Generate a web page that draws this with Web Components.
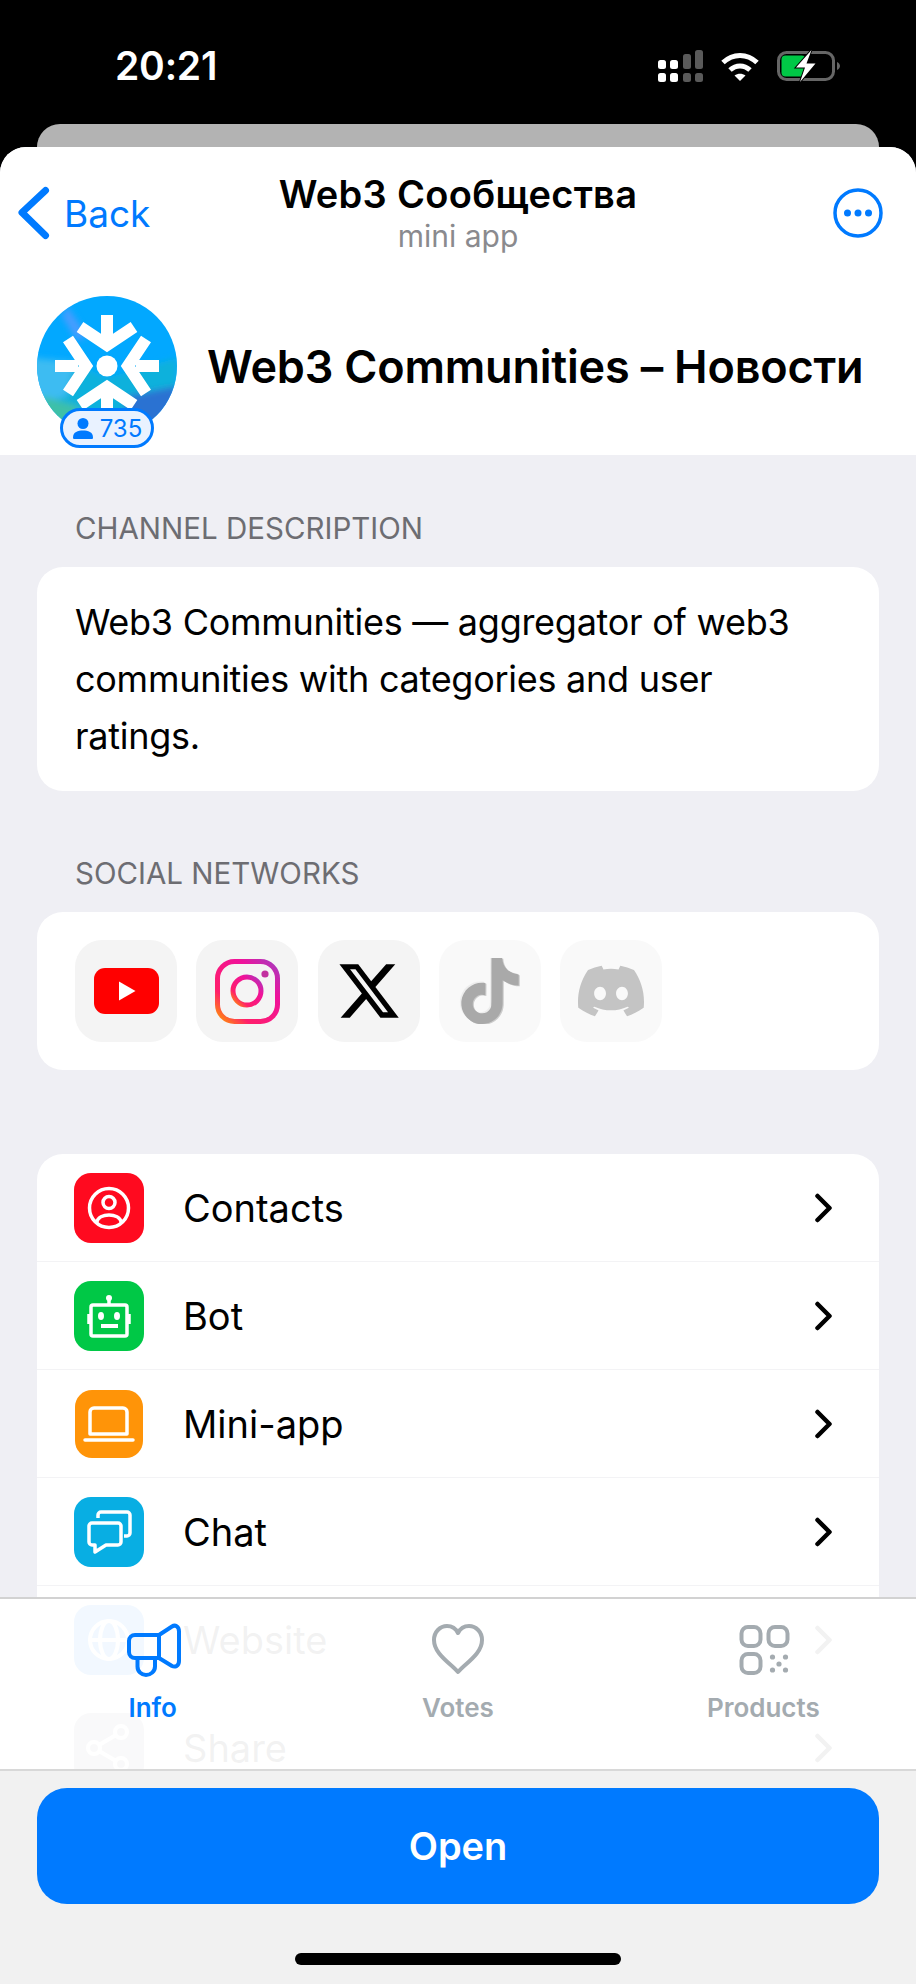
<!DOCTYPE html>
<html>
<head>
<meta charset="utf-8">
<title>Web3 Communities</title>
<style>
  html, body { margin: 0; padding: 0; background: #000; }
  body { font-family: Inter, "Noto Sans", "Liberation Sans", sans-serif; }
</style>
</head>
<body>
<app-shell>
  <status-bar slot="status" time="20:21"></status-bar>
  <nav-bar slot="nav" title-text="Web3 Сообщества" subtitle="mini app" back="Back"></nav-bar>
  <channel-hero slot="hero" name="Web3 Communities – Новости" members="735"></channel-hero>

  <section-label>CHANNEL DESCRIPTION</section-label>
  <info-card pad="text">Web3 Communities — aggregator of web3 communities with categories and user ratings.</info-card>

  <section-label gap="65">SOCIAL NETWORKS</section-label>
  <info-card pad="tiles">
    <social-tile>
      <svg width="102" height="102" viewBox="0 0 102 102"><rect x="19" y="28" width="65" height="46" rx="11" fill="#f00"/><path d="M44 41.5L60.5 51 44 60.5z" fill="#fff"/></svg>
    </social-tile>
    <social-tile>
      <svg width="102" height="102" viewBox="0 0 102 102"><defs><linearGradient id="ig" x1="0" y1="1" x2="1" y2="0"><stop offset="0" stop-color="#ff9a00"/><stop offset=".25" stop-color="#ff1f6b"/><stop offset=".7" stop-color="#f0129a"/><stop offset="1" stop-color="#a53bc0"/></linearGradient></defs><rect x="21.5" y="21.5" width="60" height="60" rx="17" fill="none" stroke="url(#ig)" stroke-width="5"/><circle cx="51" cy="51" r="14" fill="none" stroke="url(#ig)" stroke-width="5"/><circle cx="69" cy="34" r="3.6" fill="#c2309f"/></svg>
    </social-tile>
    <social-tile>
      <svg width="66" height="66" viewBox="0 0 24 24"><path d="M18.244 2.25h3.308l-7.227 8.26 8.502 11.24H16.17l-5.214-6.817L4.99 21.75H1.68l7.73-8.835L1.254 2.25H8.08l4.713 6.231zm-1.161 17.52h1.833L7.084 4.126H5.117z" fill="#000"/></svg>
    </social-tile>
    <social-tile dim>
      <svg width="66" height="66" viewBox="0 0 24 24"><path transform="translate(-.5 -.4)" fill="#ddd" d="M12.525.02c1.31-.02 2.61-.01 3.91-.02.08 1.53.63 3.09 1.75 4.17 1.12 1.11 2.7 1.62 4.24 1.79v4.03c-1.44-.05-2.89-.35-4.2-.97-.57-.26-1.1-.59-1.62-.93-.01 2.92.01 5.84-.02 8.75-.08 1.4-.54 2.79-1.35 3.94-1.31 1.92-3.58 3.17-5.91 3.21-1.43.08-2.86-.31-4.08-1.03-2.02-1.19-3.44-3.37-3.65-5.71-.02-.5-.03-1-.01-1.49.18-1.9 1.12-3.72 2.58-4.96 1.66-1.44 3.98-2.13 6.15-1.72.02 1.48-.04 2.96-.04 4.44-.99-.32-2.15-.23-3.02.37-.63.41-1.11 1.04-1.36 1.75-.21.51-.15 1.07-.14 1.61.24 1.64 1.82 3.02 3.5 2.87 1.12-.01 2.19-.66 2.77-1.61.19-.33.4-.67.41-1.06.1-1.79.06-3.57.07-5.36.01-4.03-.01-8.05.02-12.07z"/><path transform="translate(.4 .3)" fill="#9a9a9a" d="M12.525.02c1.31-.02 2.61-.01 3.91-.02.08 1.53.63 3.09 1.75 4.17 1.12 1.11 2.7 1.62 4.24 1.79v4.03c-1.44-.05-2.89-.35-4.2-.97-.57-.26-1.1-.59-1.62-.93-.01 2.92.01 5.84-.02 8.75-.08 1.4-.54 2.79-1.35 3.94-1.31 1.92-3.58 3.17-5.91 3.21-1.43.08-2.86-.31-4.08-1.03-2.02-1.19-3.44-3.37-3.65-5.71-.02-.5-.03-1-.01-1.49.18-1.9 1.12-3.72 2.58-4.96 1.66-1.44 3.98-2.13 6.15-1.72.02 1.48-.04 2.96-.04 4.44-.99-.32-2.15-.23-3.02.37-.63.41-1.11 1.04-1.36 1.75-.21.51-.15 1.07-.14 1.61.24 1.64 1.82 3.02 3.5 2.87 1.12-.01 2.19-.66 2.77-1.61.19-.33.4-.67.41-1.06.1-1.79.06-3.57.07-5.36.01-4.03-.01-8.05.02-12.07z"/><path fill="#555" d="M12.525.02c1.31-.02 2.61-.01 3.91-.02.08 1.53.63 3.09 1.75 4.17 1.12 1.11 2.7 1.62 4.24 1.79v4.03c-1.44-.05-2.89-.35-4.2-.97-.57-.26-1.1-.59-1.62-.93-.01 2.92.01 5.84-.02 8.75-.08 1.4-.54 2.79-1.35 3.94-1.31 1.92-3.58 3.17-5.91 3.21-1.43.08-2.86-.31-4.08-1.03-2.02-1.19-3.44-3.37-3.65-5.71-.02-.5-.03-1-.01-1.49.18-1.9 1.12-3.72 2.58-4.96 1.66-1.44 3.98-2.13 6.15-1.72.02 1.48-.04 2.96-.04 4.44-.99-.32-2.15-.23-3.02.37-.63.41-1.11 1.04-1.36 1.75-.21.51-.15 1.07-.14 1.61.24 1.64 1.82 3.02 3.5 2.87 1.12-.01 2.19-.66 2.77-1.61.19-.33.4-.67.41-1.06.1-1.79.06-3.57.07-5.36.01-4.03-.01-8.05.02-12.07z"/></svg>
    </social-tile>
    <social-tile dim>
      <svg width="66" height="66" viewBox="0 0 24 24"><path fill="#8a8a8a" d="M20.317 4.3698a19.7913 19.7913 0 00-4.8851-1.5152.0741.0741 0 00-.0785.0371c-.211.3753-.4447.8648-.6083 1.2495-1.8447-.2762-3.68-.2762-5.4868 0-.1636-.3933-.4058-.8742-.6177-1.2495a.077.077 0 00-.0785-.037 19.7363 19.7363 0 00-4.8852 1.515.0699.0699 0 00-.0321.0277C.5334 9.0458-.319 13.5799.0992 18.0578a.0824.0824 0 00.0312.0561c2.0528 1.5076 4.0413 2.4228 5.9929 3.0294a.0777.0777 0 00.0842-.0276c.4616-.6304.8731-1.2952 1.226-1.9942a.076.076 0 00-.0416-.1057c-.6528-.2476-1.2743-.5495-1.8722-.8923a.077.077 0 01-.0076-.1277c.1258-.0943.2517-.1923.3718-.2914a.0743.0743 0 01.0776-.0105c3.9278 1.7933 8.18 1.7933 12.0614 0a.0739.0739 0 01.0785.0095c.1202.099.246.1981.3728.2924a.077.077 0 01-.0066.1276 12.2986 12.2986 0 01-1.873.8914.0766.0766 0 00-.0407.1067c.3604.698.7719 1.3628 1.225 1.9932a.076.076 0 00.0842.0286c1.961-.6067 3.9495-1.5219 6.0023-3.0294a.077.077 0 00.0313-.0552c.5004-5.177-.8382-9.6739-3.5485-13.6604a.061.061 0 00-.0312-.0286zM8.02 15.3312c-1.1825 0-2.1569-1.0857-2.1569-2.419 0-1.3332.9555-2.4189 2.157-2.4189 1.2108 0 2.1757 1.0952 2.1568 2.419 0 1.3332-.9555 2.4189-2.1569 2.4189zm7.9748 0c-1.1825 0-2.1569-1.0857-2.1569-2.419 0-1.3332.9554-2.4189 2.1569-2.4189 1.2108 0 2.1757 1.0952 2.1568 2.419 0 1.3332-.946 2.4189-2.1568 2.4189Z"/></svg>
    </social-tile>
  </info-card>

  <link-list>
    <link-row label="Contacts" color="#ff0a1f">
      <svg width="70" height="70" viewBox="0 0 70 70" fill="none" stroke="#fff" stroke-width="3.500"><circle cx="35" cy="35" r="19.5"/><circle cx="35" cy="29.5" r="6"/><path d="M22.5 49.5C25 39.5 45 39.5 47.500 49.500"/></svg>
    </link-row>
    <link-row label="Bot" color="#00c846">
      <svg width="70" height="70" viewBox="0 0 70 70" fill="none" stroke="#fff" stroke-width="3.500"><rect x="17" y="24" width="36" height="31" rx="2"/><path d="M35 24v-7"/><circle cx="35" cy="17" r="3" fill="#fff" stroke="none"/><path d="M15 33v10M55 33v10"/><ellipse cx="27" cy="35" rx="3" ry="4" fill="#fff" stroke="none"/><ellipse cx="43" cy="35" rx="3" ry="4" fill="#fff" stroke="none"/><rect x="27" y="43" width="17" height="4" fill="#fff" stroke="none"/></svg>
    </link-row>
    <link-row label="Mini-app" color="#ff9408" size="68">
      <svg width="68" height="68" viewBox="0 0 68 68" fill="none" stroke="#fff" stroke-width="3.500"><path d="M15 44V22a4 4 0 0 1 4-4h29a4 4 0 0 1 4 4v22z" stroke-linejoin="round"/><path d="M10 50h48" stroke-linecap="round"/></svg>
    </link-row>
    <link-row label="Chat" color="#08aee3">
      <svg width="70" height="70" viewBox="0 0 70 70" fill="none" stroke="#fff" stroke-width="3.500" stroke-linejoin="round"><path d="M18 26h26a3 3 0 0 1 3 3v16a3 3 0 0 1-3 3H32l-11 7v-7h-3a3 3 0 0 1-3-3V29a3 3 0 0 1 3-3z"/><path d="M24 21v-3a3 3 0 0 1 3-3h26a3 3 0 0 1 3 3v18a3 3 0 0 1-3 3h-3"/></svg>
    </link-row>
    <link-row label="Website" color="#007aff">
      <svg width="70" height="70" viewBox="0 0 70 70" fill="none" stroke="#fff" stroke-width="4"><circle cx="35" cy="35" r="19"/><ellipse cx="35" cy="35" rx="9" ry="19"/><path d="M16 35h38"/></svg>
    </link-row>
    <link-row label="Share" color="#8e8e93" last>
      <svg width="70" height="70" viewBox="0 0 70 70" fill="none" stroke="#fff" stroke-width="4"><circle cx="47" cy="19" r="6"/><circle cx="20" cy="35" r="6"/><circle cx="47" cy="51" r="6"/><path d="M25 32l17-10M25 38l17 10"/></svg>
    </link-row>
  </link-list>

  <tab-bar slot="tabs">
    <tab-item label="Info" active>
      <svg width="60" height="60" viewBox="0 0 60 60" fill="none" stroke="#007aff" stroke-width="4" stroke-linejoin="round"><g transform="translate(1 0)"><path d="M35 13H11a6 6 0 0 0-6 6v11a6 6 0 0 0 6 6h24z"/><path d="M35 13l13-8.500c3-2 7-.5 7 5v29.500c0 5-4 6.500-7 5L35 36"/><path d="M13.500 36.500v8c0 5 4 8.500 8.500 8.500s9-3.500 9-8.500V37"/></g></svg>
    </tab-item>
    <tab-item label="Votes">
      <svg width="60" height="60" viewBox="0 0 60 60" fill="none" stroke="#a4abb0" stroke-width="4" stroke-linejoin="round"><path d="M30 50C22 41 6 32 6 18 6 10 12 4 19 4c5 0 9 3 11 7 2-4 6-7 11-7 7 0 13 6 13 14 0 14-16 23-24 32z"/></svg>
    </tab-item>
    <tab-item label="Products">
      <svg width="60" height="60" viewBox="0 0 60 60" fill="#a4abb0"><g transform="translate(1.500 -1)"><g fill="none" stroke="#a4abb0" stroke-width="4"><rect x="7" y="6" width="19" height="19" rx="6.500"/><rect x="34" y="6" width="19" height="19" rx="6.500"/><rect x="7" y="33" width="19" height="19" rx="6.500"/></g><circle cx="38" cy="36" r="2.600"/><circle cx="51" cy="36" r="2.600"/><circle cx="44.500" cy="43" r="2.600"/><circle cx="38" cy="49" r="2.600"/><circle cx="51" cy="49" r="2.600"/></g></svg>
    </tab-item>
  </tab-bar>

  <open-footer slot="footer" label="Open"></open-footer>
</app-shell>

<script>
// small helper, every element below builds its own shadow root the same way
class ShadowBase extends HTMLElement {
  constructor() {
    super();
    this.shadow = this.attachShadow({mode: "open"});
  }
  connectedCallback() {
    this.shadow.innerHTML = this.render();
  }
}

class AppShell extends ShadowBase {
  render() {
    return `
      <style>
        :host { display: block; width: 916px; height: 1984px; overflow: hidden; background: #000; }
        .frame { display: flex; flex-direction: column; height: 100%; }
        .peek { height: 23px; margin: 0 37px; flex: none; background: #b3b3b3; border-radius: 24px 24px 0 0; }
        .sheet { flex: 1; min-height: 0; display: flex; flex-direction: column; background: #efeff4; border-radius: 26px 26px 0 0; overflow: hidden; }
        .scroll { position: relative; flex: 1; min-height: 0; overflow: hidden; }
        .content { padding: 56px 37px 0; }
      </style>
      <div class="frame">
        <slot name="status"></slot>
        <div class="peek"></div>
        <div class="sheet">
          <slot name="nav"></slot>
          <div class="scroll">
            <slot name="hero"></slot>
            <div class="content"><slot></slot></div>
            <slot name="tabs"></slot>
          </div>
          <slot name="footer"></slot>
        </div>
      </div>
    `;
  }
}

class StatusBar extends ShadowBase {
  render() {
    return `
      <style>
        :host { display: flex; justify-content: space-between; align-items: flex-start; height: 124px; box-sizing: border-box; padding: 50px 76px 0 115px; color: #fff; flex: none; }
        .time { font-size: 39px; font-weight: 600; line-height: 32px; letter-spacing: -.2px; }
        .icons { display: flex; gap: 18px; }
        svg { display: block; }
      </style>
      <div class="time">${this.getAttribute("time")}</div>
      <div class="icons">
        <svg width="45" height="32" viewBox="0 0 45 32"><g fill="#fff"><rect x="0" y="10" width="8" height="9" rx="2.500"/><rect x="12" y="10" width="8" height="9" rx="2.500"/><rect x="0" y="23" width="8" height="9" rx="2.500"/><rect x="12" y="23" width="8" height="9" rx="2.500"/></g><g fill="#5a5a5a"><rect x="25" y="4" width="8" height="15" rx="2.500"/><rect x="37" y="0" width="8" height="19" rx="2.500"/><rect x="25" y="23" width="8" height="9" rx="2.500"/><rect x="37" y="23" width="8" height="9" rx="2.500"/></g></svg>
        <svg width="38" height="32" viewBox="0 0 38 32"><g fill="none" stroke="#fff" stroke-width="5"><path d="M2 12.500C12 3 26 3 36 12.500"/><path d="M9 20C15 14.500 23 14.500 29 20"/></g><path d="M13.500 25.500C17 23 21 23 24.500 25.500L19 31z" fill="#fff"/></svg>
        <svg width="63" height="32" viewBox="0 0 63 32"><rect x="1.500" y="2.500" width="55" height="27" rx="8" fill="none" stroke="#666" stroke-width="3"/><path d="M60 12c2 1 3 2.500 3 4s-1 3-3 4z" fill="#666"/><rect x="4.500" y="5.500" width="24" height="21" rx="4" fill="#00c846"/><path d="M34.500 0L19 17.500h9L23 32l15.500-18.500h-9z" fill="#fff" stroke="#000" stroke-width="2" paint-order="stroke"/></svg>
      </div>
    `;
  }
}

class NavBar extends ShadowBase {
  render() {
    return `
      <style>
        :host { display: grid; grid-template-columns: 1fr auto 1fr; align-items: center; height: 149px; box-sizing: border-box; padding: 20px 33px 37px; background: #fff; flex: none; }
        .back { display: flex; align-items: center; gap: 14px; margin-left: -15px; color: #007aff; font-size: 37px; }
        .center { text-align: center; padding-top: 4px; }
        .title { font-size: 38px; font-weight: 600; line-height: 42px; color: #000; letter-spacing: .3px; }
        .sub { font-size: 30px; line-height: 42px; color: #8a8a8e; }
        .more { justify-self: end; display: block; }
        svg { display: block; }
      </style>
      <div class="back">
        <svg width="32" height="54" viewBox="0 0 32 54" fill="none" stroke="#007aff" stroke-width="7" stroke-linecap="round" stroke-linejoin="round"><path d="M27.500 4.500L4 26.500l23.500 23"/></svg>
        <span>${this.getAttribute("back")}</span>
      </div>
      <div class="center">
        <div class="title">${this.getAttribute("title-text")}</div>
        <div class="sub">${this.getAttribute("subtitle")}</div>
      </div>
      <svg class="more" width="50" height="50" viewBox="0 0 50 50"><circle cx="25" cy="25" r="23" fill="none" stroke="#007aff" stroke-width="3.500"/><g fill="#007aff"><circle cx="14.500" cy="25" r="3.500"/><circle cx="25" cy="25" r="3.500"/><circle cx="35.500" cy="25" r="3.500"/></g></svg>
    `;
  }
}

class ChannelHero extends ShadowBase {
  render() {
    return `
      <style>
        :host { display: flex; align-items: center; gap: 30px; padding: 0 37px 19px; background: #fff; }
        .avatar { position: relative; width: 140px; height: 140px; flex: none; }
        .avatar svg.pic { display: block; }
        .badge { position: absolute; left: 23px; top: 112px; width: 94px; height: 40px; box-sizing: border-box; display: flex; align-items: center; justify-content: center; gap: 6px; border: 3px solid #007aff; border-radius: 20px; background: #e9f2ff; color: #007aff; font-size: 24px; }
        h1 { margin: 0; font-size: 45px; font-weight: 600; color: #000; white-space: nowrap; letter-spacing: -.2px; }
      </style>
      <div class="avatar">
        <svg class="pic" width="140" height="140" viewBox="0 0 140 140">
          <defs><clipPath id="c"><circle cx="70" cy="70" r="70"/></clipPath><filter id="b"><feGaussianBlur stdDeviation="3"/></filter></defs>
          <g clip-path="url(#c)">
            <rect width="140" height="140" fill="#02a8ff"/>
            <g filter="url(#b)">
              <path d="M-5 62L36 66 70 82 140 62V150H-5z" fill="#0fb1dc"/>
              <path d="M-5 62L38 66 30 100-5 110z" fill="#3dbcf2"/>
              <path d="M5 100L40 110 60 150H0z" fill="#3cc0a8"/>
              <path d="M90 100L140 90V150H80z" fill="#2a72d2"/>
              <path d="M30 10L50 40 40 45 25 20z" fill="#4a9cff"/>
            </g>
            <g fill="none" stroke="#fff" stroke-width="12">
              <path d="M70 19V42"/><path d="M43 31L70 49 97 31"/>
              <path d="M70 121V98"/><path d="M43 109L70 91 97 109"/>
              <path d="M18 70H41"/><path d="M31 43L49 70 31 97"/>
              <path d="M122 70H99"/><path d="M109 43L91 70 109 97"/>
            </g>
            <circle cx="70" cy="70" r="10.500" fill="#fff"/>
          </g>
        </svg>
        <div class="badge">
          <svg width="22" height="22" viewBox="0 0 22 22" fill="#007aff"><circle cx="11" cy="6.500" r="5.500"/><path d="M1 20.500C1 15 6 13.500 11 13.500S21 15 21 20.500c0 1-.5 1.500-1.500 1.500h-17C1.500 22 1 21.500 1 20.500z"/></svg>
          <span>${this.getAttribute("members")}</span>
        </div>
      </div>
      <h1>${this.getAttribute("name")}</h1>
    `;
  }
}

class SectionLabel extends ShadowBase {
  render() {
    const gap = this.getAttribute("gap") || 0;
    return `
      <style>
        :host { display: block; margin-top: ${gap}px; padding: 0 38px 22px; font-size: 29.5px; line-height: 34px; color: #6d6d72; }
      </style>
      <slot></slot>
    `;
  }
}

class InfoCard extends ShadowBase {
  render() {
    const tiles = this.getAttribute("pad") === "tiles";
    return `
      <style>
        :host { display: ${tiles ? "flex" : "block"}; gap: 19.25px; box-sizing: border-box; background: #fff; border-radius: 26px; color: #000;
          padding: ${tiles ? "28px 38px" : "27px 38px 26px"}; font-size: 36px; line-height: 57px; letter-spacing: -.27px; }
      </style>
      <slot></slot>
    `;
  }
}

class SocialTile extends ShadowBase {
  render() {
    return `
      <style>
        :host { display: flex; align-items: center; justify-content: center; width: 102px; height: 102px; flex: none; border-radius: 27px; background: #f4f4f4; opacity: ${this.hasAttribute("dim") ? .5 : 1}; }
        ::slotted(svg) { display: block; }
      </style>
      <slot></slot>
    `;
  }
}

class LinkList extends ShadowBase {
  render() {
    return `
      <style>
        :host { display: block; margin-top: 84px; background: #fff; border-radius: 26px 26px 0 0; padding-bottom: 40px; }
      </style>
      <slot></slot>
    `;
  }
}

class LinkRow extends ShadowBase {
  render() {
    const size = this.getAttribute("size") || 70;
    const line = this.hasAttribute("last") ? "transparent" : "#f3f3f5";
    return `
      <style>
        :host { display: flex; align-items: center; height: 108px; box-sizing: border-box; padding: 0 45px 0 0; border-bottom: 1px solid ${line}; color: #000; font-size: 38px; }
        .slot-box { width: 70px; margin-left: 37px; display: flex; justify-content: center; flex: none; }
        .icon { width: ${size}px; height: ${size}px; border-radius: 17px; background: ${this.getAttribute("color")}; }
        .text { flex: 1; margin-left: 39px; }
        ::slotted(svg) { display: block; }
        svg.chev { display: block; }
      </style>
      <div class="slot-box"><div class="icon"><slot></slot></div></div>
      <div class="text">${this.getAttribute("label")}</div>
      <svg class="chev" width="20" height="30" viewBox="0 0 20 30" fill="none" stroke="#000" stroke-width="4.500" stroke-linecap="round" stroke-linejoin="round"><path d="M3.500 3L15.500 15l-12 12"/></svg>
    `;
  }
}

class TabBar extends ShadowBase {
  render() {
    return `
      <style>
        :host { position: absolute; left: 0; right: 0; bottom: 0; height: 174px; box-sizing: border-box; display: grid; grid-template-columns: repeat(3, 1fr); background: rgba(255,255,255,.95); border-top: 2px solid #d2d2d2; border-bottom: 2px solid #d8d8d8; }
      </style>
      <slot></slot>
    `;
  }
}

class TabItem extends ShadowBase {
  render() {
    const color = this.hasAttribute("active") ? "#007aff" : "#a4abb0";
    return `
      <style>
        :host { display: flex; flex-direction: column; align-items: center; padding-top: 23px; color: ${color}; font-size: 26px; font-weight: 600; }
        ::slotted(svg) { display: block; }
        .label { margin-top: 11px; line-height: 30px; }
      </style>
      <slot></slot>
      <div class="label">${this.getAttribute("label")}</div>
    `;
  }
}

class OpenFooter extends ShadowBase {
  render() {
    return `
      <style>
        :host { display: flex; flex-direction: column; align-items: center; height: 213px; box-sizing: border-box; padding: 17px 37px 0; background: #f1f1f1; flex: none; }
        .btn { width: 100%; height: 116px; display: flex; align-items: center; justify-content: center; background: #007aff; border-radius: 30px; color: #fff; font-size: 38px; font-weight: 600; }
        .home { margin-top: 49px; width: 326px; height: 12px; border-radius: 6px; background: #000; }
      </style>
      <div class="btn">${this.getAttribute("label")}</div>
      <div class="home"></div>
    `;
  }
}

customElements.define("app-shell", AppShell);
customElements.define("status-bar", StatusBar);
customElements.define("nav-bar", NavBar);
customElements.define("channel-hero", ChannelHero);
customElements.define("section-label", SectionLabel);
customElements.define("info-card", InfoCard);
customElements.define("social-tile", SocialTile);
customElements.define("link-list", LinkList);
customElements.define("link-row", LinkRow);
customElements.define("tab-bar", TabBar);
customElements.define("tab-item", TabItem);
customElements.define("open-footer", OpenFooter);
</script>
</body>
</html>
